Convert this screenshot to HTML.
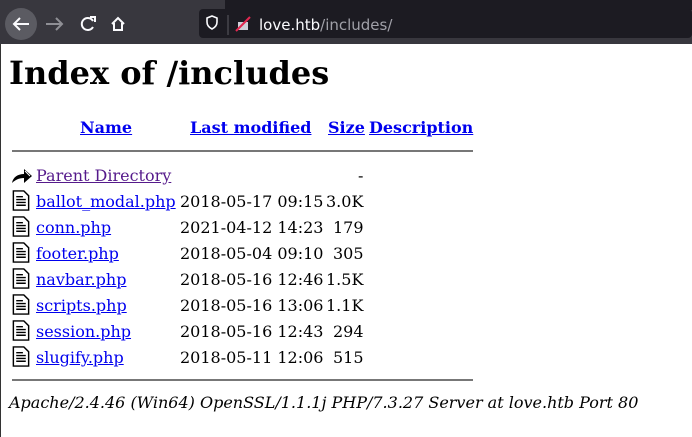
<html><head><style>
body{margin:0;width:692px;height:437px;overflow:hidden;background:#fff;font-family:"DejaVu Serif",serif;font-size:16px;position:relative}
.bar{position:absolute;left:0;top:0;width:692px;height:44px;background:#38373e}
.tabs{position:absolute;left:225px;top:0;width:467px;height:10px;background:#1c1b22}
.url{position:absolute;left:199px;top:9px;width:493px;height:29px;background:#1c1b22;border-radius:4px}
.a{position:absolute;white-space:nowrap;line-height:19px}
a{color:#0000ee}
.ic{position:absolute;left:12px;width:18px;height:21px}
hr{position:absolute;left:12px;width:461px;margin:0;border:0;height:2px;background:#777}
</style></head><body>
<div class="bar"></div><div class="tabs"></div><div class="url"></div>
<svg style="position:absolute;left:0;top:0" width="692" height="44">
<circle cx="21" cy="24" r="16" fill="#5b5b62"/>
<path d="M29 24H14M20 18l-6 6 6 6" stroke="#fbfbfe" stroke-width="2" fill="none"/>
<path d="M62 24H46M56 18l6 6-6 6" stroke="#8f8f95" stroke-width="2" fill="none"/>
<path d="M93 21a6 6 0 1 0 0 6" stroke="#fbfbfe" stroke-width="2" fill="none"/><path d="M90 17h5v5" stroke="#fbfbfe" stroke-width="2" fill="none"/>
<path d="M112 24l6-6 6 6M114 23v7h8v-7" stroke="#fbfbfe" stroke-width="2" fill="none"/>
<path d="M207 18l5-2 5 2v4c0 4-3 6-5 7-2-1-5-3-5-7z" stroke="#fbfbfe" stroke-width="1.6" fill="none"/>
<line x1="228" y1="15" x2="228" y2="35" stroke="#5b5b62"/>
<rect x="238" y="22" width="10" height="8" fill="#cfcfd8"/>
<line x1="236" y1="31" x2="250" y2="17" stroke="#e22850" stroke-width="2"/>
<text x="259" y="30" font-family="DejaVu Sans" font-size="15" fill="#fbfbfe">love.htb<tspan fill="#a0a0a8">/includes/</tspan></text>
</svg>
<div style="position:absolute;left:0;top:44px;width:1px;height:393px;background:#333"></div>
<div class="a" style="left:9px;top:53px;font-size:32px;line-height:40px;font-weight:bold">Index of /includes</div>
<div class="a" style="top:118px;font-weight:bold;left:80px"><a href="#">Name</a></div>
<div class="a" style="top:118px;font-weight:bold;left:190px"><a href="#">Last modified</a></div>
<div class="a" style="top:118px;font-weight:bold;left:328px"><a href="#">Size</a></div>
<div class="a" style="top:118px;font-weight:bold;left:369px"><a href="#">Description</a></div>
<hr style="top:150px">
<svg class="ic" style="top:164px;width:22px;height:22px;left:11px" viewBox="0 0 22 22"><path d="M1 19c1-6 6-9 12-9V5l8 7-8 7v-5c-5 0-9 2-12 5z" fill="#000"/><path d="M14 7l5 5" stroke="#fff" stroke-width="1"/></svg>
<div class="a" style="top:166px;left:36px"><a href="#" style="color:#551a8b">Parent Directory</a></div>
<div class="a" style="top:166px;left:358px">-</div>
<div class="a" style="top:192px;left:36px"><a href="#">ballot_modal.php</a></div><div class="a" style="top:192px;left:180px">2018-05-17 09:15</div><div class="a" style="top:192px;left:326px">3.0K</div>
<div class="a" style="top:218px;left:36px"><a href="#">conn.php</a></div><div class="a" style="top:218px;left:180px">2021-04-12 14:23</div><div class="a" style="top:218px;left:333px">179</div>
<div class="a" style="top:244px;left:36px"><a href="#">footer.php</a></div><div class="a" style="top:244px;left:180px">2018-05-04 09:10</div><div class="a" style="top:244px;left:333px">305</div>
<div class="a" style="top:270px;left:36px"><a href="#">navbar.php</a></div><div class="a" style="top:270px;left:180px">2018-05-16 12:46</div><div class="a" style="top:270px;left:326px">1.5K</div>
<div class="a" style="top:296px;left:36px"><a href="#">scripts.php</a></div><div class="a" style="top:296px;left:180px">2018-05-16 13:06</div><div class="a" style="top:296px;left:326px">1.1K</div>
<div class="a" style="top:322px;left:36px"><a href="#">session.php</a></div><div class="a" style="top:322px;left:180px">2018-05-16 12:43</div><div class="a" style="top:322px;left:333px">294</div>
<div class="a" style="top:348px;left:36px"><a href="#">slugify.php</a></div><div class="a" style="top:348px;left:180px">2018-05-11 12:06</div><div class="a" style="top:348px;left:333px">515</div>
<svg width="0" height="0"><defs><g id="f"><path d="M1 1h11l5 5v15H1z" fill="#fff" stroke="#000" stroke-width="1.5"/><path d="M4 7h7M4 10h10M4 13h10M4 16h10" stroke="#000" stroke-width="1.5"/></g></defs></svg>
<svg class="ic" style="top:190px" viewBox="0 0 18 22"><use href="#f"/></svg>
<svg class="ic" style="top:216px" viewBox="0 0 18 22"><use href="#f"/></svg>
<svg class="ic" style="top:242px" viewBox="0 0 18 22"><use href="#f"/></svg>
<svg class="ic" style="top:268px" viewBox="0 0 18 22"><use href="#f"/></svg>
<svg class="ic" style="top:294px" viewBox="0 0 18 22"><use href="#f"/></svg>
<svg class="ic" style="top:320px" viewBox="0 0 18 22"><use href="#f"/></svg>
<svg class="ic" style="top:346px" viewBox="0 0 18 22"><use href="#f"/></svg>
<hr style="top:379px">
<div class="a" style="top:393px;left:9px;font-style:italic">Apache/2.4.46 (Win64) OpenSSL/1.1.1j PHP/7.3.27 Server at love.htb Port 80</div>
</body></html>
